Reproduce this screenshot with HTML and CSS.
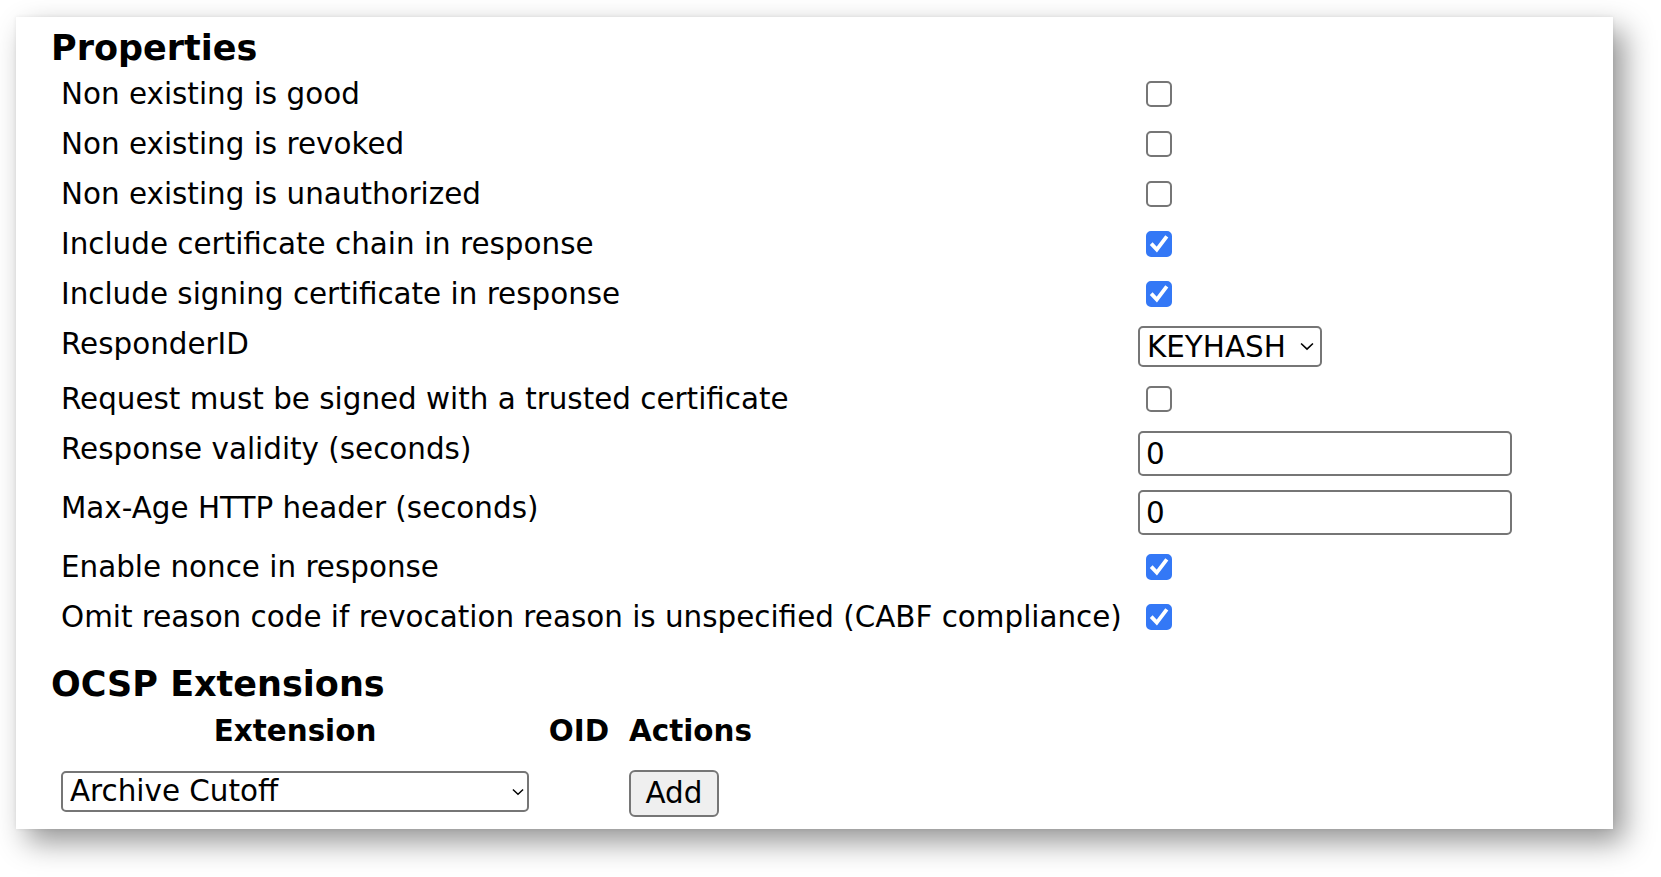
FILE: index.html
```html
<!DOCTYPE html>
<html lang="en">
<head>
<meta charset="utf-8">
<title>OCSP Properties</title>
<link rel="stylesheet" href="styles.css">
</head>
<body>
<div class="card">
  <h3 class="section-title">Properties</h3>
  <div class="props">
    <div class="prop-row">
      <label class="prop-label">Non existing is good</label>
      <span class="cb"><input type="checkbox"></span>
    </div>
    <div class="prop-row">
      <label class="prop-label">Non existing is revoked</label>
      <span class="cb"><input type="checkbox"></span>
    </div>
    <div class="prop-row">
      <label class="prop-label">Non existing is unauthorized</label>
      <span class="cb"><input type="checkbox"></span>
    </div>
    <div class="prop-row">
      <label class="prop-label">Include certificate chain in response</label>
      <span class="cb"><input type="checkbox" checked><svg class="tick" viewBox="0 0 26 26"><path d="M5.2 12.6 L10.8 18.6 L20.8 5.4" /></svg></span>
    </div>
    <div class="prop-row">
      <label class="prop-label">Include signing certificate in response</label>
      <span class="cb"><input type="checkbox" checked><svg class="tick" viewBox="0 0 26 26"><path d="M5.2 12.6 L10.8 18.6 L20.8 5.4" /></svg></span>
    </div>
    <div class="prop-row">
      <label class="prop-label">ResponderID</label>
      <span class="select-wrap key-wrap">
        <select class="sel sel-key"><option>KEYHASH</option><option>NAME</option></select>
        <svg class="chev" viewBox="0 0 13 8"><path d="M1 1.2 L6.5 6.5 L12 1.2" /></svg>
      </span>
    </div>
    <div class="prop-row">
      <label class="prop-label">Request must be signed with a trusted certificate</label>
      <span class="cb"><input type="checkbox"></span>
    </div>
    <div class="prop-row">
      <label class="prop-label">Response validity (seconds)</label>
      <input class="txt" type="text" value="0">
    </div>
    <div class="prop-row">
      <label class="prop-label">Max-Age HTTP header (seconds)</label>
      <input class="txt" type="text" value="0">
    </div>
    <div class="prop-row">
      <label class="prop-label">Enable nonce in response</label>
      <span class="cb"><input type="checkbox" checked><svg class="tick" viewBox="0 0 26 26"><path d="M5.2 12.6 L10.8 18.6 L20.8 5.4" /></svg></span>
    </div>
    <div class="prop-row">
      <label class="prop-label">Omit reason code if revocation reason is unspecified (CABF compliance)</label>
      <span class="cb"><input type="checkbox" checked><svg class="tick" viewBox="0 0 26 26"><path d="M5.2 12.6 L10.8 18.6 L20.8 5.4" /></svg></span>
    </div>
  </div>

  <h3 class="section-title ext-title">OCSP Extensions</h3>
  <div class="ext-grid">
    <div class="ext-head">Extension</div>
    <div class="ext-head">OID</div>
    <div class="ext-head">Actions</div>
    <span class="select-wrap ext-wrap">
      <select class="sel sel-ext"><option>Archive Cutoff</option></select>
      <svg class="chev chev-ext" viewBox="0 0 13 8"><path d="M1 1.2 L6.5 6.5 L12 1.2" /></svg>
    </span>
    <div class="oid-cell"></div>
    <div class="act-cell"><button class="btn" type="button">Add</button></div>
  </div>
</div>
</body>
</html>
```

FILE: styles.css
```css
html {
  margin: 0;
  background: #ffffff;
}

body {
  margin: 0;
  min-height: 100vh;
  box-sizing: border-box;
  padding: 17px 0 0 16px;
  font-family: "DejaVu Sans", Verdana, sans-serif;
  font-size: 29.4px;
  color: #000;
}

.card {
  width: 1597px;
  box-sizing: border-box;
  background: #fff;
  padding: 11px 34px 12px 35px;
  box-shadow: 11px 13px 28px rgba(0, 0, 0, 0.42), 0 0 4px rgba(0, 0, 0, 0.07);
}

.section-title {
  font-size: 35px;
  font-weight: bold;
  margin: 0;
  line-height: normal;
}

.props {
  display: flex;
  flex-direction: column;
  gap: 12px;
  margin-top: 7px;
}

.prop-row {
  display: flex;
  align-items: flex-start;
}

.prop-label {
  width: 1077px;
  padding: 2px 0 0 10px;
  line-height: normal;
  flex: none;
}

/* checkbox */
.cb {
  position: relative;
  display: block;
  width: 26px;
  height: 26px;
  margin: 6px 6px 6px 8px;
  flex: none;
}

.cb input {
  appearance: none;
  -webkit-appearance: none;
  display: block;
  margin: 0;
  width: 26px;
  height: 26px;
  box-sizing: border-box;
  border: 2px solid #767676;
  border-radius: 5px;
  background: #fff;
}

.cb input:checked {
  background: #3478f6;
  border-color: #3478f6;
}

.tick {
  position: absolute;
  left: 0;
  top: 0;
  width: 26px;
  height: 26px;
  pointer-events: none;
}

.tick path {
  fill: none;
  stroke: #fff;
  stroke-width: 3.8;
  stroke-linejoin: miter;
}

/* selects */
.select-wrap {
  position: relative;
  display: block;
  margin: 1px 0;
  flex: none;
}

.sel {
  appearance: none;
  -webkit-appearance: none;
  display: block;
  font: inherit;
  color: #000;
  height: 41px;
  box-sizing: border-box;
  border: 2px solid #767676;
  border-radius: 5px;
  background: #fff;
  padding: 0 30px 0 7px;
  margin: 0;
}

.sel-key {
  width: 184px;
}

.sel-ext {
  width: 468px;
}

.chev {
  position: absolute;
  right: 8px;
  top: 16px;
  width: 14px;
  height: 9px;
  pointer-events: none;
}

.chev-ext {
  right: 5px;
  top: 17px;
  width: 12px;
  height: 8px;
}

.chev path {
  fill: none;
  stroke: #000;
  stroke-width: 1.5;
}

/* text inputs */
.txt {
  display: block;
  font: inherit;
  color: #000;
  width: 374px;
  height: 45px;
  box-sizing: border-box;
  border: 2px solid #767676;
  border-radius: 5px;
  padding: 0 6px;
  margin: 1px 0;
  background: #fff;
  flex: none;
}

/* extensions */
.ext-title {
  margin-top: 27.5px;
}

.ext-grid {
  display: grid;
  grid-template-columns: 468px 62px 123px;
  column-gap: 19px;
  row-gap: 22px;
  margin: 10px 0 0 10px;
  align-items: start;
}

.ext-wrap {
  margin-top: 1px;
}

.ext-head {
  font-weight: bold;
  text-align: center;
  line-height: normal;
}

.btn {
  font: inherit;
  color: #000;
  background: #efefef;
  border: 2px solid #767676;
  border-radius: 6px;
  padding: 0 14.5px;
  height: 47px;
  box-sizing: border-box;
  line-height: normal;
  margin: 0;
}
```
